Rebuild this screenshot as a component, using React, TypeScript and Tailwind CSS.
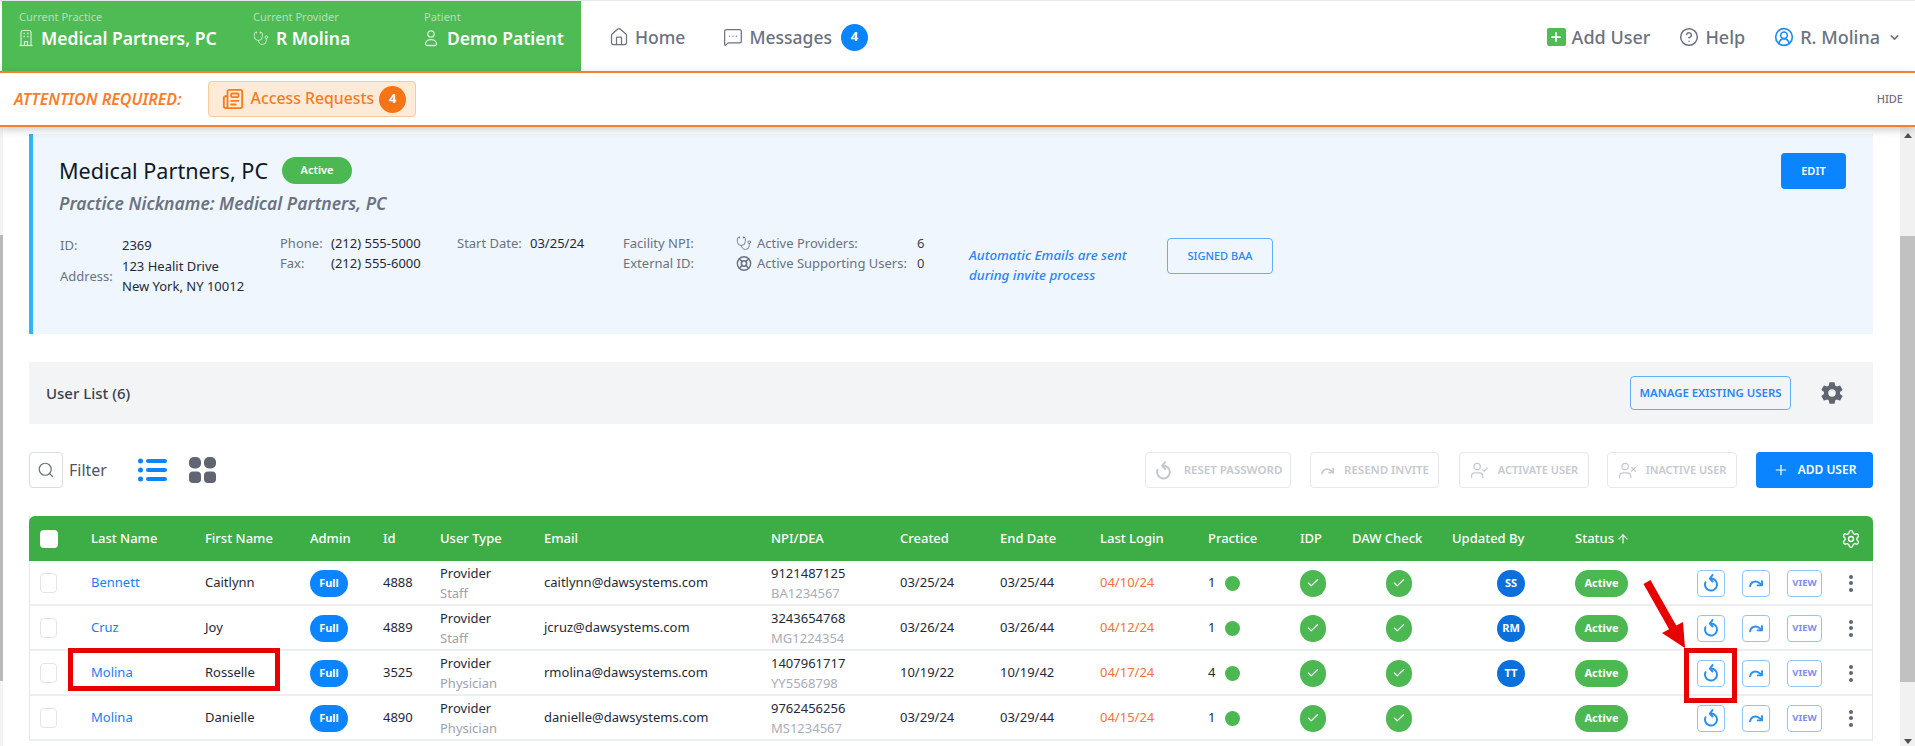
import { ArrowUp, ChevronDown, Check, CircleHelp, CircleUserRound, Home, LifeBuoy, MessageSquareMore, Newspaper, Plus, Search, Settings, Stethoscope, UserCheck, UserX } from 'lucide-react';
import { IoSettingsSharp } from 'react-icons/io5';

const users = [
  { last: 'Bennett', first: 'Caitlynn', id: '4888', type: 'Staff', email: 'caitlynn@dawsystems.com', npi: '9121487125', dea: 'BA1234567', created: '03/25/24', end: '03/25/44', login: '04/10/24', practice: '1', by: 'SS' },
  { last: 'Cruz', first: 'Joy', id: '4889', type: 'Staff', email: 'jcruz@dawsystems.com', npi: '3243654768', dea: 'MG1224354', created: '03/26/24', end: '03/26/44', login: '04/12/24', practice: '1', by: 'RM' },
  { last: 'Molina', first: 'Rosselle', id: '3525', type: 'Physician', email: 'rmolina@dawsystems.com', npi: '1407961717', dea: 'YY5568798', created: '10/19/22', end: '10/19/42', login: '04/17/24', practice: '4', by: 'TT' },
  { last: 'Molina', first: 'Danielle', id: '4890', type: 'Physician', email: 'danielle@dawsystems.com', npi: '9762456256', dea: 'MS1234567', created: '03/29/24', end: '03/29/44', login: '04/15/24', practice: '1', by: '' },
];

function BuildingIcon() {
  return (
    <svg viewBox="0 0 14 18" className="w-[14px] h-[18px] text-[#d6efd8]" fill="none" stroke="currentColor" strokeWidth="1.2">
      <path d="M2 16.500V3.500A2 2 0 0 1 4 1.500h6a2 2 0 0 1 2 2v13" />
      <path d="M.5 16.500h13" />
      <path d="M5.500 16.500v-4h3v4" />
      <path d="M4.500 4.500h1.500M8 4.500h1.500M4.500 7.500h1.500M8 7.500h1.500" strokeWidth="1.500" />
    </svg>
  );
}

function PersonIcon() {
  return (
    <svg viewBox="0 0 14 18" className="w-[14px] h-[18px]" fill="none" stroke="currentColor" strokeWidth="1.3">
      <circle cx="7" cy="5" r="3.2" />
      <path d="M3 16.5h8a1.5 1.5 0 0 0 1.5-1.5c0-2.6-2.4-4.4-5.5-4.4S1.500 12.400 1.500 15A1.500 1.500 0 0 0 3 16.500z" />
    </svg>
  );
}

function ResetIcon({ className }: { className: string }) {
  return (
    <svg viewBox="0 0 24 24" className={className} fill="none" stroke="currentColor" strokeWidth="2.6" strokeLinecap="round" strokeLinejoin="round">
      <path d="M12 6a8 8 0 1 1-7.400 5" />
      <path d="M14 1.500 10.500 6 14 10" />
    </svg>
  );
}

function ResendIcon({ className }: { className: string }) {
  return (
    <svg viewBox="0 0 24 24" className={className} fill="none" stroke="currentColor" strokeWidth="2.8" strokeLinecap="round" strokeLinejoin="round">
      <path d="M3 17c1-6 8-10 14-5l4 3" />
      <path d="M21 9v6.500h-6.500" />
    </svg>
  );
}

function Context({ label, value, icon, gap, width }: { label: string; value: string; icon: React.ReactNode; gap: string; width: string }) {
  return (
    <div className={width}>
      <div className="text-[11px] leading-[14px] text-[#b5dfb8]">{label}</div>
      <div className={`flex items-center mt-[2px] text-white ${gap}`}>
        {icon}
        <span className="text-[17.5px] leading-[24px] font-semibold whitespace-nowrap">{value}</span>
      </div>
    </div>
  );
}

function NavLink({ icon, label, size }: { icon: React.ReactNode; label: string; size: string }) {
  return (
    <div className={`flex items-center gap-[6px] text-[#6b7280] font-medium ${size}`}>
      {icon}
      <span>{label}</span>
    </div>
  );
}

function DisabledButton({ icon, label, width, gap, size }: { icon: React.ReactNode; label: string; width: string; gap: string; size: string }) {
  return (
    <div className={`h-[36px] flex items-center justify-center rounded-[4px] border border-[#e5e7eb] text-[#c5c9d0] font-semibold ${width} ${gap} ${size}`}>
      {icon}
      <span>{label}</span>
    </div>
  );
}

function UserRow({ u }: { u: (typeof users)[number] }) {
  return (
    <div className="grid grid-cols-[61px_114px_105px_73px_57px_104px_227px_129px_100px_100px_108px_92px_52px_100px_123px_122px_1fr] items-center h-[45px] pt-[1px] border-b-2 border-[#edeef0] text-[13px] text-[#1f2937]">
      <div className="pl-[10px]">
        <div className="w-[17px] h-[20px] rounded-[4px] border border-[#e2e4e8] bg-white" />
      </div>
      <div className="text-[#1a7ef0]">{u.last}</div>
      <div>{u.first}</div>
      <div>
        <div className="w-[38px] h-[27px] rounded-full bg-[#0a84ff] text-white text-[11px] font-bold flex items-center justify-center">Full</div>
      </div>
      <div>{u.id}</div>
      <div className="leading-[20px]">
        <div>Provider</div>
        <div className="text-[#9ca3af]">{u.type}</div>
      </div>
      <div>{u.email}</div>
      <div className="leading-[20px]">
        <div>{u.npi}</div>
        <div className="text-[#a8adb8]">{u.dea}</div>
      </div>
      <div>{u.created}</div>
      <div>{u.end}</div>
      <div className="text-[#f4713a]">{u.login}</div>
      <div className="flex items-center gap-[10px]">
        <span>{u.practice}</span>
        <span className="w-[15px] h-[15px] rounded-full bg-[#4cb852]" />
      </div>
      <div>
        <div className="w-[26px] h-[27px] rounded-full bg-[#4cb852] text-white flex items-center justify-center">
          <Check className="w-[14px] h-[14px]" strokeWidth={2} />
        </div>
      </div>
      <div className="pl-[34px]">
        <div className="w-[26px] h-[27px] rounded-full bg-[#4cb852] text-white flex items-center justify-center">
          <Check className="w-[14px] h-[14px]" strokeWidth={2} />
        </div>
      </div>
      <div className="pl-[45px]">
        {u.by && (
          <div className="w-[28px] h-[27px] rounded-full bg-[#0b6fdc] text-white text-[11px] font-bold flex items-center justify-center">{u.by}</div>
        )}
      </div>
      <div>
        <div className="w-[53px] h-[27px] rounded-full bg-[#4cb852] text-white text-[11px] font-bold flex items-center justify-center">Active</div>
      </div>
      <div className="flex items-center">
        <div className="w-[28px] h-[27px] rounded-[4px] border-[1.5px] border-[#8ec5fb] text-[#2b8ff0] flex items-center justify-center">
          <ResetIcon className="w-[18px] h-[18px]" />
        </div>
        <div className="w-[28px] h-[27px] ml-[17px] rounded-[4px] border-[1.5px] border-[#8ec5fb] text-[#2b8ff0] flex items-center justify-center">
          <ResendIcon className="w-[16px] h-[16px]" />
        </div>
        <div className="w-[35px] h-[27px] ml-[17px] rounded-[4px] border-[1.5px] border-[#8ec5fb] text-[#7c8cf0] text-[9.5px] font-bold flex items-center justify-center">VIEW</div>
        <div className="ml-[27px] flex flex-col gap-[2.500px]">
          <span className="w-[4px] h-[4px] rounded-full bg-[#5f6672]" />
          <span className="w-[4px] h-[4px] rounded-full bg-[#5f6672]" />
          <span className="w-[4px] h-[4px] rounded-full bg-[#5f6672]" />
        </div>
      </div>
    </div>
  );
}

export default function App() {
  return (
    <div className="relative w-[1915px] h-[746px] overflow-hidden flex flex-col bg-white font-['Noto_Sans',sans-serif]">
      <header className="h-[71px] shrink-0 border-t border-[#e5e7eb] flex items-stretch pl-[2px] bg-white shadow-sm">
        <div className="w-[579px] bg-[#4fbb55] flex pl-[17px] pt-[9px]">
          <Context width="w-[234px]" gap="gap-[8px]" label="Current Practice" value="Medical Partners, PC" icon={<BuildingIcon />} />
          <Context width="w-[171px]" gap="gap-[7px]" label="Current Provider" value="R Molina" icon={<Stethoscope className="w-[16px] h-[17px] text-[#d6efd8]" strokeWidth={1.3} />} />
          <Context width="w-[150px]" gap="gap-[9px]" label="Patient" value="Demo Patient" icon={<span className="text-[#d6efd8]"><PersonIcon /></span>} />
        </div>
        <div className="flex-1 flex items-center pl-[28px] pr-[14px] pt-[2px]">
          <NavLink size="text-[17.5px]" icon={<Home className="w-[20px] h-[20px]" strokeWidth={1.5} />} label="Home" />
          <div className="ml-[38px] flex items-center">
            <NavLink size="text-[17.5px]" icon={<MessageSquareMore className="w-[20px] h-[20px]" strokeWidth={1.5} />} label="Messages" />
            <span className="ml-[9px] w-[27px] h-[27px] rounded-full bg-[#0a84ff] text-white text-[13px] font-bold flex items-center justify-center">4</span>
          </div>
          <div className="ml-auto flex items-center">
            <NavLink size="text-[18px]" icon={<span className="w-[19px] h-[18px] rounded-[2px] bg-[#4fbb55] text-white flex items-center justify-center"><Plus className="w-[14px] h-[14px]" strokeWidth={3} /></span>} label="Add User" />
            <div className="ml-[29px]">
              <NavLink size="text-[18px]" icon={<CircleHelp className="w-[20px] h-[20px]" strokeWidth={1.8} />} label="Help" />
            </div>
            <div className="ml-[29px]">
              <NavLink size="text-[18px]" icon={<CircleUserRound className="w-[20px] h-[20px] text-[#1f8ff5]" strokeWidth={2} />} label="R. Molina" />
            </div>
            <ChevronDown className="ml-[8px] w-[13px] h-[13px] text-[#6b7280]" strokeWidth={3} />
          </div>
        </div>
      </header>

      <div className="relative z-10 h-[56px] shrink-0 flex items-center bg-white border-y-2 border-[#f97d2c] pl-[14px] pr-[12px] shadow-[0_3px_8px_rgba(0,0,0,0.2)]">
        <span className="text-[16px] font-semibold italic text-[#f97d2c]">ATTENTION REQUIRED:</span>
        <div className="ml-[26px] w-[208px] h-[36px] rounded-[4px] border border-[#f9c99b] bg-[#fdebd8] flex items-center pl-[13px] text-[#f57c1f]">
          <Newspaper className="w-[22px] h-[22px]" strokeWidth={2} />
          <span className="ml-[7px] text-[15.8px] font-medium whitespace-nowrap">Access Requests</span>
          <span className="ml-[5px] w-[27px] h-[27px] shrink-0 rounded-full bg-[#f57416] text-white text-[13px] font-bold flex items-center justify-center">4</span>
        </div>
        <span className="ml-auto text-[11px] font-medium text-[#6b7280]">HIDE</span>
      </div>

      <div className="flex-1 flex min-h-0">
        <div className="w-[3px] shrink-0 flex flex-col bg-[#f3f3f3]">
          <div className="h-[108px]" />
          <div className="h-[446px] bg-[#b9b9b9]" />
        </div>

        <main className="flex-1 min-w-0 pl-[26px] pr-[27px] pt-[7px]">
          <section className="relative h-[200px] bg-[#eff6fe] border-l-4 border-[#2db5f5] pl-[26px] pt-[23px] text-[13px]">
            <div className="flex items-center">
              <h1 className="text-[21.6px] leading-[26px] text-[#111827]">Medical Partners, PC</h1>
              <span className="ml-[14px] w-[70px] h-[27px] rounded-full bg-[#4cb852] text-white text-[11px] font-semibold flex items-center justify-center">Active</span>
            </div>
            <div className="mt-[7px] text-[17.5px] leading-[24px] font-semibold italic text-[#6b7280]">Practice Nickname: Medical Partners, PC</div>
            <div className="flex mt-[18px] leading-[20px] text-[#1f2937]">
              <div className="w-[221px]">
                <div className="flex h-[24px] items-center">
                  <span className="w-[63px] pl-[1px] text-[#6b7280]">ID:</span>
                  <span>2369</span>
                </div>
                <div className="flex items-center -mt-[1px]">
                  <span className="w-[63px] pl-[1px] text-[#6b7280]">Address:</span>
                  <div>
                    <div>123 Healit Drive</div>
                    <div>New York, NY 10012</div>
                  </div>
                </div>
              </div>
              <div className="w-[177px]">
                <div className="flex">
                  <span className="w-[51px] text-[#6b7280]">Phone:</span>
                  <span>(212) 555-5000</span>
                </div>
                <div className="flex">
                  <span className="w-[51px] text-[#6b7280]">Fax:</span>
                  <span>(212) 555-6000</span>
                </div>
              </div>
              <div className="w-[166px] flex">
                <span className="w-[73px] text-[#6b7280]">Start Date:</span>
                <span>03/25/24</span>
              </div>
              <div className="w-[113px] text-[#6b7280]">
                <div>Facility NPI:</div>
                <div>External ID:</div>
              </div>
              <div className="w-[233px] text-[#6b7280]">
                <div className="flex items-center">
                  <Stethoscope className="w-[16px] h-[17px]" strokeWidth={1.3} />
                  <span className="ml-[5px] w-[160px]">Active Providers:</span>
                  <span className="text-[#374151]">6</span>
                </div>
                <div className="flex items-center">
                  <LifeBuoy className="w-[16px] h-[17px]" strokeWidth={2.2} />
                  <span className="ml-[5px] w-[160px]">Active Supporting Users:</span>
                  <span className="text-[#374151]">0</span>
                </div>
              </div>
              <div className="w-[198px] pt-[12px] text-[13.4px] font-medium italic text-[#2a85f5]">
                <div>Automatic Emails are sent</div>
                <div>during invite process</div>
              </div>
              <div className="w-[106px] h-[36px] mt-[5px] rounded-[4px] border border-[#62aef8] text-[#2a85f5] text-[11px] font-medium flex items-center justify-center">SIGNED BAA</div>
            </div>
            <div className="absolute top-[19px] right-[27px] w-[65px] h-[36px] rounded-[4px] bg-[#0a84ff] text-white text-[11px] font-semibold flex items-center justify-center">EDIT</div>
          </section>

          <section className="mt-[28px] h-[62px] bg-[#f3f4f6] flex items-center pl-[17px] pr-[29px]">
            <h2 className="text-[15px] font-medium text-[#374151]">User List (6)</h2>
            <div className="ml-auto w-[161px] h-[34px] rounded-[4px] border border-[#62aef8] text-[#2a85f5] text-[11.4px] font-semibold flex items-center justify-center">MANAGE EXISTING USERS</div>
            <IoSettingsSharp className="ml-[29px] w-[24px] h-[24px] text-[#5f6672]" />
          </section>

          <div className="mt-[28px] h-[36px] flex items-center">
            <div className="w-[34px] h-[36px] rounded-[4px] border border-[#d9dce1] text-[#6b7280] flex items-center justify-center">
              <Search className="w-[18px] h-[18px]" strokeWidth={1.6} />
            </div>
            <span className="ml-[6px] text-[16px] text-[#4b5563]">Filter</span>
            <svg viewBox="0 0 29 24" className="ml-[31px] w-[29px] h-[24px] text-[#0a84ff]" fill="currentColor">
              <circle cx="2.500" cy="3" r="2.500" />
              <circle cx="2.500" cy="12" r="2.500" />
              <circle cx="2.500" cy="21" r="2.500" />
              <rect x="8" y="1" width="21" height="4" rx="2" />
              <rect x="8" y="10" width="21" height="4" rx="2" />
              <rect x="8" y="19" width="21" height="4" rx="2" />
            </svg>
            <svg viewBox="0 0 27 26" className="ml-[22px] w-[27px] h-[26px] text-[#5f6672]" fill="currentColor">
              <rect width="12" height="11.500" rx="5" />
              <rect x="15" width="12" height="11.500" rx="5" />
              <rect y="14.500" width="12" height="11.500" rx="4" />
              <rect x="15" y="14.500" width="12" height="11.500" rx="4" />
            </svg>
            <div className="ml-auto flex items-center">
              <DisabledButton size="text-[11.5px]" width="w-[146px]" gap="gap-[11px]" icon={<ResetIcon className="w-[19px] h-[19px]" />} label="RESET PASSWORD" />
              <div className="ml-[19px]">
                <DisabledButton size="text-[11.5px]" width="w-[129px]" gap="gap-[9px]" icon={<ResendIcon className="w-[15px] h-[15px]" />} label="RESEND INVITE" />
              </div>
              <div className="ml-[20px]">
                <DisabledButton size="text-[11px]" width="w-[130px]" gap="gap-[9px]" icon={<UserCheck className="w-[19px] h-[19px]" strokeWidth={1.5} />} label="ACTIVATE USER" />
              </div>
              <div className="ml-[18px]">
                <DisabledButton size="text-[11px]" width="w-[130px]" gap="gap-[9px]" icon={<UserX className="w-[19px] h-[19px]" strokeWidth={1.5} />} label="INACTIVE USER" />
              </div>
              <div className="ml-[19px] w-[117px] h-[36px] rounded-[4px] bg-[#0a84ff] text-white text-[12px] font-semibold flex items-center justify-center gap-[9px]">
                <Plus className="w-[16px] h-[16px]" strokeWidth={1.8} />
                <span>ADD USER</span>
              </div>
            </div>
          </div>

          <section className="mt-[28px] border-x border-[#e5e7eb]">
            <div className="grid grid-cols-[62px_114px_105px_73px_57px_104px_227px_129px_100px_100px_108px_92px_52px_100px_123px_1fr] items-center h-[45px] -mx-px rounded-t-[6px] bg-[#3cae45] text-white text-[13px] font-medium">
              <div className="pl-[11px]">
                <div className="w-[18px] h-[18px] rounded-[4px] bg-white" />
              </div>
              <div>Last Name</div>
              <div>First Name</div>
              <div>Admin</div>
              <div>Id</div>
              <div>User Type</div>
              <div>Email</div>
              <div>NPI/DEA</div>
              <div>Created</div>
              <div>End Date</div>
              <div>Last Login</div>
              <div>Practice</div>
              <div>IDP</div>
              <div>DAW Check</div>
              <div>Updated By</div>
              <div className="flex items-center">
                <span>Status</span>
                <ArrowUp className="ml-[2px] w-[14px] h-[14px]" strokeWidth={2} />
                <Settings className="ml-auto mr-[12px] w-[20px] h-[20px]" strokeWidth={1.6} />
              </div>
            </div>
            {users.map((u) => (
              <UserRow key={u.id} u={u} />
            ))}
          </section>
        </main>

        <div className="w-[15px] shrink-0 flex flex-col items-center bg-[#f1f1f1]">
          <div className="h-[17px] flex items-center">
            <div className="w-0 h-0 border-x-[4px] border-x-transparent border-b-[5px] border-b-[#505050]" />
          </div>
          <div className="h-[92px]" />
          <div className="w-full h-[446px] bg-[#c1c1c1]" />
          <div className="mt-auto h-[10px] flex items-center">
            <div className="w-0 h-0 border-x-[4px] border-x-transparent border-t-[5px] border-t-[#505050]" />
          </div>
        </div>
      </div>

      <div className="absolute left-[68px] top-[648px] w-[212px] h-[43px] border-[5px] border-[#e60000]" />
      <div className="absolute left-[1684px] top-[648px] w-[53px] h-[55px] border-[5px] border-[#e60000]" />
      <svg className="absolute left-[1640px] top-[578px] w-[50px] h-[74px]" viewBox="0 0 50 74">
        <path d="M7 4 L33 50" stroke="#e60000" strokeWidth="8" fill="none" />
        <path d="M45 70 L43 44 L22 55 Z" fill="#e60000" />
      </svg>
    </div>
  );
}
